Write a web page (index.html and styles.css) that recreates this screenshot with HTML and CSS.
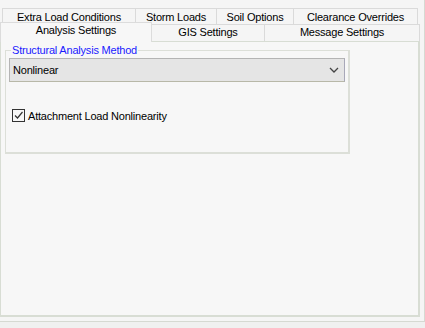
FILE: index.html
```html
<!DOCTYPE html>
<html lang="en">
<head>
  <meta charset="UTF-8" />
  <title>Analysis Settings</title>
  <link rel="stylesheet" href="styles.css">
</head>
<body>

  <div class="window">
    <!-- Tab strip, two rows -->
    <div class="tabs">
      <div class="tab-row back">
        <div class="tab w-extra">Extra Load Conditions</div>
        <div class="tab w-storm">Storm Loads</div>
        <div class="tab w-soil">Soil Options</div>
        <div class="tab w-clear">Clearance Overrides</div>
      </div>
      <div class="tab-row front">
        <div class="tab selected w-analysis">Analysis Settings</div>
        <div class="tab w-gis">GIS Settings</div>
        <div class="tab w-msg">Message Settings</div>
      </div>
    </div>

    <div class="panel">
      <fieldset class="group">
        <legend>Structural Analysis Method</legend>
        <div class="combo">
          <span>Nonlinear</span>
          <svg class="chevron" width="10" height="6" viewBox="0 0 10 6">
            <path d="M1 1 L5 5 L9 1" fill="none" stroke="#444" stroke-width="1.3" />
          </svg>
        </div>
        <label class="check">
          <span class="box">
            <svg width="11" height="11" viewBox="0 0 11 11">
              <path d="M2 5.5 L4.5 8 L9.5 2" fill="none" stroke="#333" stroke-width="1.2" />
            </svg>
          </span>
          Attachment Load Nonlinearity
        </label>
      </fieldset>
    </div>
  </div>

</body>
</html>
```

FILE: styles.css
```css
/* General */
body {
  margin: 0;
  padding: 0;
  font-family: "Liberation Sans", Arial, sans-serif;
  font-size: 11px;
  letter-spacing: -0.2px;
  color: #000;
  background-color: #f0f0f0;
}

.window {
  width: 424px;
  height: 321px;
  background-color: #f5f5f5;
  border-right: 1px solid #d6d9d2;
  border-bottom: 1px solid #d6d9d2;
}

/* Tabs */
.tabs {
  padding-top: 8px;
}

.tab-row {
  display: flex;
}

.tab-row.back {
  margin-left: 2px;
}

.tab {
  box-sizing: border-box;
  height: 16px;
  line-height: 16px;
  text-align: center;
  border: 1px solid #dadada;
  border-bottom: none;
  border-left: none;
  background-color: #f5f5f5;
  white-space: nowrap;
}

.back .tab:first-child {
  border-left: 1px solid #dadada;
}

.front {
  height: 17px;
}

.front .tab {
  height: 17px;
  line-height: 15px;
  border-left: 1px solid #dadada;
}

.front .tab + .tab {
  border-left: none;
}

.tab.selected {
  height: 20px;
  margin-top: -2px;
  line-height: 15px;
  background-color: #f7f7f7;
  border-color: #dcdcdc;
  position: relative;
  z-index: 1;
}

.w-extra { width: 134px; }
.w-storm { width: 81px; }
.w-soil { width: 77px; }
.w-clear { width: 124px; }
.w-analysis { width: 152px; }
.w-gis { width: 113px; }
.w-msg { width: 155px; }

/* Page panel */
.panel {
  box-sizing: border-box;
  width: 420px;
  height: 276px;
  background-color: #f7f7f7;
  border: 1px solid #d8ddd4;
  border-bottom-width: 2px;
  border-right-width: 2px;
  padding: 2px 0 0 4px;
}

/* Group box */
.group {
  box-sizing: border-box;
  width: 345px;
  height: 110px;
  margin: 0;
  padding: 2px 3px 0 3px;
  border: 1px solid #dcdfd8;
  border-right-width: 2px;
  border-bottom-width: 2px;
}

.group legend {
  color: #1a1aff;
  padding: 0 1px;
  margin-left: 2px;
}

.combo {
  box-sizing: border-box;
  height: 24px;
  display: flex;
  align-items: center;
  justify-content: space-between;
  padding: 0 5px 0 3px;
  background-color: #e5e5e5;
  border: 1px solid #b4b4b4;
  border-right-color: #a8a8b8;
  border-bottom-color: #b8b8a8;
}

.chevron {
  display: block;
}

.check {
  display: flex;
  align-items: center;
  gap: 3px;
  margin-top: 27px;
  margin-left: 3px;
}

.check .box {
  box-sizing: border-box;
  width: 13px;
  height: 13px;
  border: 1px solid #333;
  background-color: #f7f7f7;
  display: flex;
  align-items: center;
  justify-content: center;
}

.check .box svg {
  display: block;
}
```
